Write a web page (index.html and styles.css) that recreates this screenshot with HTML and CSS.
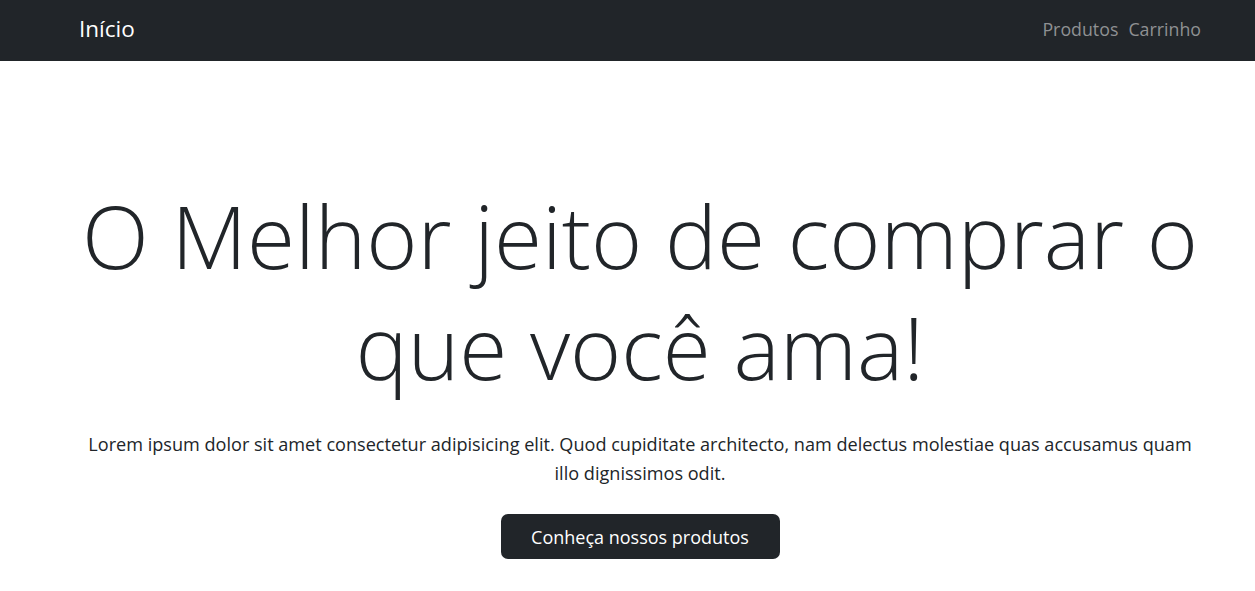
FILE: index.html
```html
<!DOCTYPE html>
<html lang="pt-BR">
<head>
<meta charset="utf-8">
<title>Loja</title>
<link rel="stylesheet" href="styles.css">
</head>
<body>
<nav class="navbar">
  <div class="container nav-inner">
    <a class="brand" href="#">Início</a>
    <div class="nav-links">
      <a class="nav-link" href="#">Produtos</a>
      <a class="nav-link" href="#">Carrinho</a>
    </div>
  </div>
</nav>
<main class="container hero">
  <h1 class="display">O Melhor jeito de comprar o que você ama!</h1>
  <p class="lead">Lorem ipsum dolor sit amet consectetur adipisicing elit. Quod cupiditate architecto, nam delectus molestiae quas accusamus quam illo dignissimos odit.</p>
  <a class="btn" href="#">Conheça nossos produtos</a>
</main>
</body>
</html>
```
FILE: styles.css
```css
* { box-sizing: border-box; }
html, body { margin: 0; padding: 0; }
body {
  font-family: "Open Sans", "Noto Sans", sans-serif;
  color: #212529;
  background: #fff;
  overflow: hidden;
}
.container {
  width: 1140px;
  margin-left: 70px;
  padding: 0 12px;
}
.navbar {
  background: #212529;
  height: 61px;
}
.nav-inner {
  display: flex;
  align-items: center;
  justify-content: space-between;
  height: 100%;
  padding-bottom: 4px;
}
.brand {
  color: #fff;
  text-decoration: none;
  font-size: 22.5px;
  margin-left: -3px;
}
.nav-links {
  display: flex;
  gap: 10px;
  margin-right: -3px;
}
.nav-link {
  color: #8f9193;
  text-decoration: none;
  font-size: 17.8px;
}
.hero {
  text-align: center;
  padding-top: 119px;
}
.display {
  font-weight: 300;
  font-size: 87.4px;
  line-height: 111px;
  margin: 0;
}
.lead {
  font-size: 18.1px;
  line-height: 29px;
  margin: 28px 0 0;
}
.btn {
  display: inline-block;
  margin-top: 26px;
  background: #212529;
  color: #fff;
  text-decoration: none;
  font-size: 18px;
  width: 279px;
  height: 45px;
  line-height: 47px;
  border-radius: 7px;
}
```
